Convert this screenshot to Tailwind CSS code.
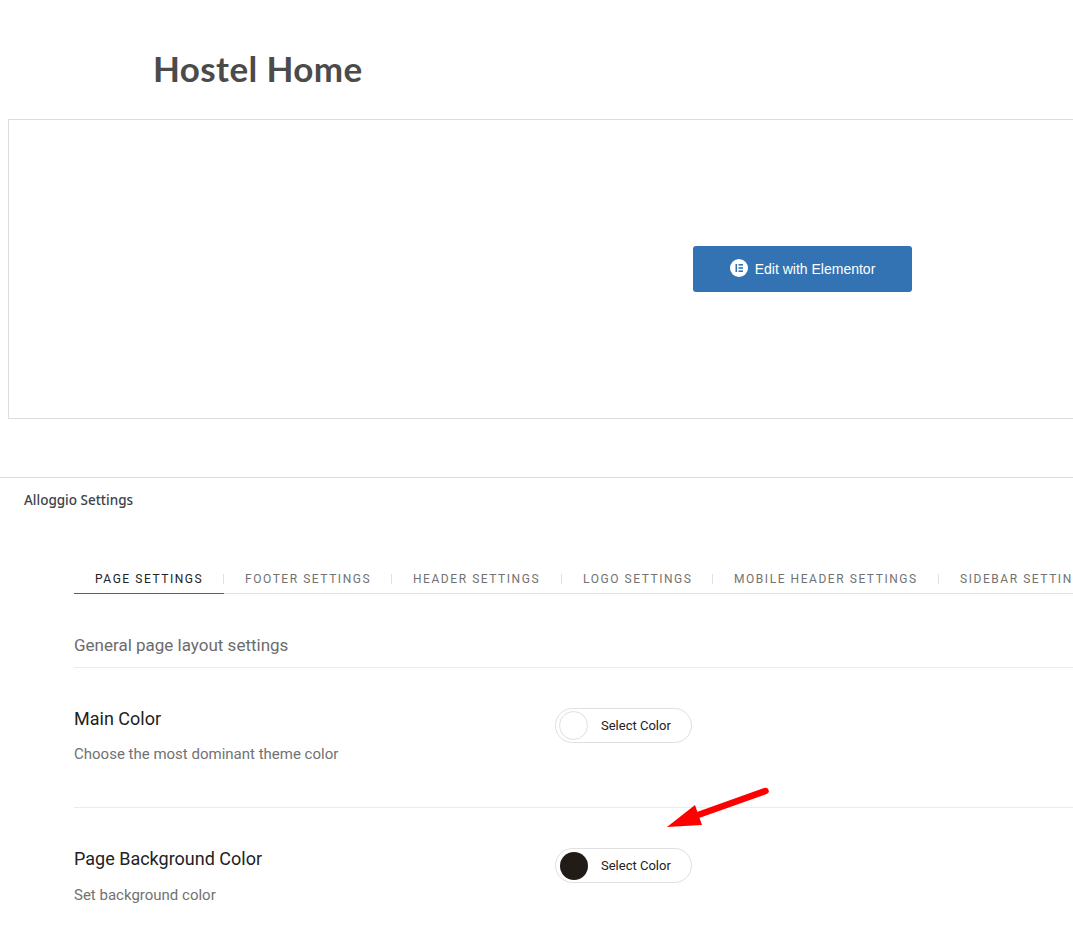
<!DOCTYPE html>
<html lang="en">
<head>
    <meta charset="UTF-8">
    <meta name="viewport" content="width=device-width, initial-scale=1.0">
    <title>Hostel Home</title>
    <script src="https://cdn.jsdelivr.net/npm/@tailwindcss/browser@4"></script>
</head>
<body class="bg-white h-[948px] overflow-hidden relative font-['Roboto',sans-serif]">
    <!-- page title -->
    <div class="h-[119px] pl-[153px] pt-[46px]">
        <h1 class="font-['Lato',sans-serif] font-bold text-[35px] leading-[44px] tracking-[0.4px] text-[#4b4b4b]">Hostel Home</h1>
    </div>

    <!-- elementor box -->
    <div class="ml-2 w-[1589px] h-[300px] border border-[#dcdcde] flex items-center justify-center">
        <button class="w-[219px] h-[46px] mb-[1px] bg-[#3373b3] rounded-[3px] flex items-center justify-center gap-[7px] text-white font-['Liberation_Sans',sans-serif] text-[14px]">
            <svg class="w-[18px] h-[18px] mb-[2px]" viewBox="0 0 18 18">
                <circle cx="9" cy="9" r="9" fill="#fff"/>
                <rect x="5.5" y="5" width="1.6" height="8" fill="#3373b3"/>
                <rect x="8.5" y="5" width="4.5" height="1.6" fill="#3373b3"/>
                <rect x="8.5" y="8.2" width="4.5" height="1.6" fill="#3373b3"/>
                <rect x="8.5" y="11.4" width="4.5" height="1.6" fill="#3373b3"/>
            </svg>
            <span class="pt-[2px]">Edit with Elementor</span>
        </button>
    </div>

    <!-- settings panel -->
    <div class="mt-[58px] border-t border-[#dcdcde]">
        <h2 class="pl-6 pt-[13px] h-[22px] box-content font-['Noto_Sans',sans-serif] font-medium text-[13.5px] leading-[18px] text-[#3c434a]">Alloggio Settings</h2>

        <div class="pl-[74px] pt-[46px]">
            <!-- tabs -->
            <div class="flex w-[1100px] h-[35px] border-b border-[#e1e1e1] text-[12px] tracking-[1.55px] text-[#727272]">
                <div class="w-[150px] h-[35px] shrink-0 border-b border-[#c72c56] pl-[21px] pt-[12px] leading-[16px] text-[#222]">PAGE SETTINGS</div>
                <div class="w-[168px] shrink-0 border-l border-[#e1e1e1] h-[10px] mt-[15px] pl-[21px] -ml-[1px] leading-[16px] flex items-center">FOOTER SETTINGS</div>
                <div class="w-[170px] shrink-0 border-l border-[#e1e1e1] h-[10px] mt-[15px] pl-[21px] leading-[16px] flex items-center">HEADER SETTINGS</div>
                <div class="w-[151px] shrink-0 border-l border-[#e1e1e1] h-[10px] mt-[15px] pl-[21px] leading-[16px] flex items-center">LOGO SETTINGS</div>
                <div class="w-[226px] shrink-0 border-l border-[#e1e1e1] h-[10px] mt-[15px] pl-[21px] leading-[16px] flex items-center">MOBILE HEADER SETTINGS</div>
                <div class="shrink-0 border-l border-[#e1e1e1] h-[10px] mt-[15px] pl-[21px] leading-[16px] flex items-center">SIDEBAR SETTINGS</div>
            </div>

            <div class="h-[74px] border-b border-[#ebebeb] pt-[39px] text-[17px] leading-[24px] text-[#6c6c6c] box-border">General page layout settings</div>

            <!-- main color -->
            <div class="flex h-[140px] border-b border-[#ebebeb] pt-[40px]">
                <div class="w-[481px]">
                    <div class="text-[18px] leading-[22px] text-[#222]">Main Color</div>
                    <div class="mt-[14px] text-[15px] leading-[20px] text-[#727272]">Choose the most dominant theme color</div>
                </div>
                <button class="w-[137px] h-[35px] rounded-full border border-[#dfdfdf] flex items-center pl-[3px] text-[13px] text-[#222]">
                    <span class="w-[29px] h-[29px] rounded-full border border-[#dfdfdf] bg-white"></span>
                    <span class="ml-[13px]">Select Color</span>
                </button>
            </div>

            <!-- page background color -->
            <div class="flex pt-[40px]">
                <div class="w-[481px]">
                    <div class="text-[18px] leading-[22px] text-[#222]">Page Background Color</div>
                    <div class="mt-[15px] text-[15px] leading-[20px] text-[#727272]">Set background color</div>
                </div>
                <button class="w-[137px] h-[35px] rounded-full border border-[#dfdfdf] flex items-center pl-[4px] text-[13px] text-[#222]">
                    <span class="w-[28px] h-[28px] rounded-full bg-[#211c18]"></span>
                    <span class="ml-[13px]">Select Color</span>
                </button>
            </div>
        </div>
    </div>

    <!-- red annotation arrow -->
    <svg class="absolute left-[660px] top-[780px] w-[115px] h-[55px]" viewBox="660 780 115 55">
        <path d="M765.5 791 L698 815" stroke="#fe0000" stroke-width="6.5" stroke-linecap="round" fill="none"/>
        <polygon points="667,827 695,805 702,825" fill="#fe0000"/>
    </svg>
</body>
</html>
